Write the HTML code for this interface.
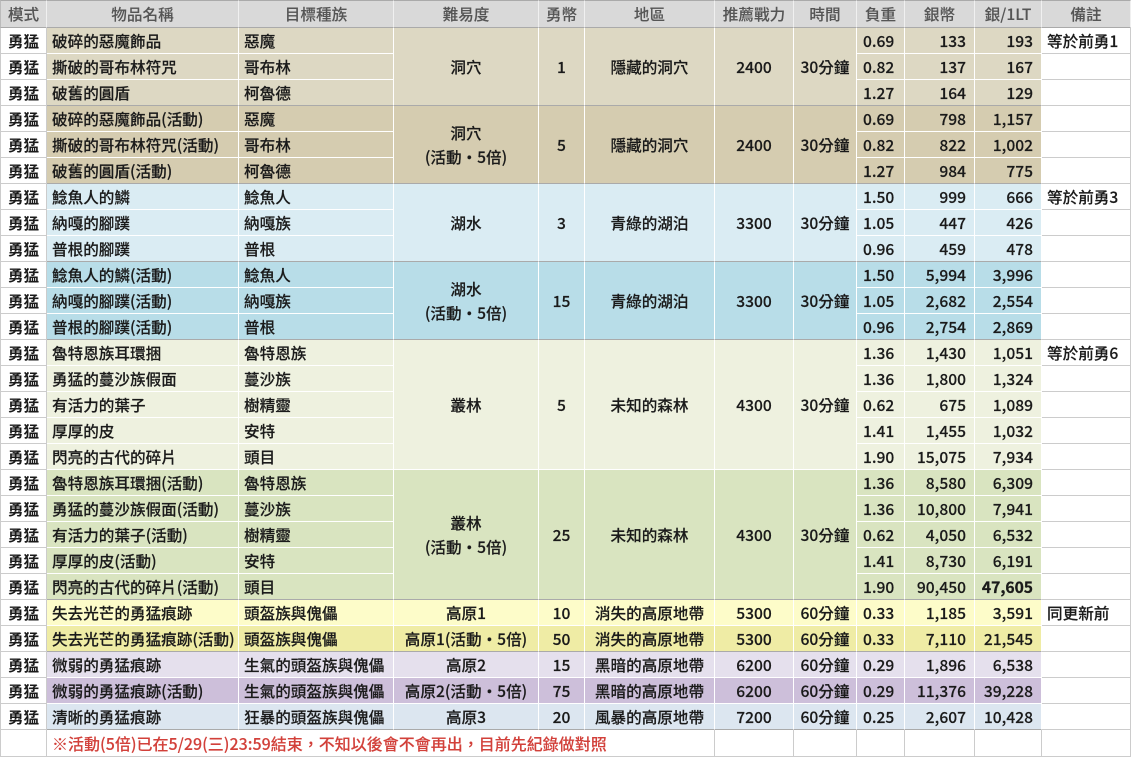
<!DOCTYPE html>
<html><head><meta charset="utf-8">
<style>
html,body{margin:0;padding:0;background:#fff;}
body{width:1131px;height:757px;overflow:hidden;}
table{border-collapse:separate;border-spacing:0;table-layout:fixed;width:1131px;font-family:"Noto Sans CJK TC","Liberation Sans",sans-serif;font-size:15.6px;font-weight:500;color:#1a1a1a;-webkit-text-stroke:0.15px #1a1a1a;}
td,th{border-right:1px solid #fff;border-bottom:1px solid #fff;height:25px;padding:0 5px;white-space:nowrap;overflow:hidden;line-height:20px;box-sizing:border-box;}
th{height:28px;background:#d9d9d9;color:#555;-webkit-text-stroke:0.1px #555;font-weight:500;border-right:1px solid #f0f0f0;border-bottom:1px solid #aaa;border-top:1px solid #aaa;}
th:first-child{border-left:1px solid #bbb;}
tr{height:26px;}
tr.h{height:28px;}
td.m{background:#fff;font-weight:bold;-webkit-text-stroke:0;border-left:1px solid #ccc;border-right:1px solid #ccc;border-bottom:1px solid #ccc;text-align:center;padding:0;}
td.r{background:#fff;border-right:1px solid #ccc;border-bottom:1px solid #ccc;}
td.c{text-align:center;}
td.n{text-align:right;padding-right:8px;}
td.ld{text-align:left;padding-left:6px;}
.gb{border-bottom:1px solid #aaa !important;}
.a td:not(.m):not(.r){background:#ddd8c3;} .a2 td:not(.m):not(.r){background:#d5ccb0;}
.b td:not(.m):not(.r){background:#daecf3;} .b2 td:not(.m):not(.r){background:#b8dde8;}
.e td:not(.m):not(.r){background:#eef1df;} .e2 td:not(.m):not(.r){background:#d9e4c0;}
.y td:not(.m):not(.r){background:#fdfcc9;} .y2 td:not(.m):not(.r){background:#efeca5;}
.p td:not(.m):not(.r){background:#e5e0ed;} .p2 td:not(.m):not(.r){background:#cdbfda;}
.s td:not(.m):not(.r){background:#dce6f0;}
td.sp{line-height:24px;}
.note td{height:27px;}
.red{color:#d2403a;-webkit-text-stroke:0.1px #d2403a;font-size:16px;}
</style></head><body>
<table>
<colgroup><col style="width:47px"><col style="width:192px"><col style="width:155px"><col style="width:145px"><col style="width:46px"><col style="width:130px"><col style="width:79px"><col style="width:63px"><col style="width:48px"><col style="width:70px"><col style="width:67px"><col style="width:89px"></colgroup>
<tr class="h"><th>模式</th><th>物品名稱</th><th>目標種族</th><th>難易度</th><th>勇幣</th><th>地區</th><th>推薦戰力</th><th>時間</th><th>負重</th><th>銀幣</th><th>銀/1LT</th><th>備註</th></tr>

<tr class="a"><td class="m">勇猛</td><td>破碎的惡魔飾品</td><td>惡魔</td><td class="c gb" rowspan="3">洞穴</td><td class="c gb" rowspan="3">1</td><td class="c gb" rowspan="3">隱藏的洞穴</td><td class="c gb" rowspan="3">2400</td><td class="c gb" rowspan="3">30分鐘</td><td class="ld">0.69</td><td class="n">133</td><td class="n">193</td><td class="r">等於前勇1</td></tr>
<tr class="a"><td class="m">勇猛</td><td>撕破的哥布林符咒</td><td>哥布林</td><td class="ld">0.82</td><td class="n">137</td><td class="n">167</td><td class="r"></td></tr>
<tr class="a"><td class="m">勇猛</td><td class="gb">破舊的圓盾</td><td class="gb">柯魯德</td><td class="ld gb">1.27</td><td class="n gb">164</td><td class="n gb">129</td><td class="r"></td></tr>

<tr class="a2"><td class="m">勇猛</td><td>破碎的惡魔飾品(活動)</td><td>惡魔</td><td class="c gb sp" rowspan="3">洞穴<br>(活動・5倍)</td><td class="c gb" rowspan="3">5</td><td class="c gb" rowspan="3">隱藏的洞穴</td><td class="c gb" rowspan="3">2400</td><td class="c gb" rowspan="3">30分鐘</td><td class="ld">0.69</td><td class="n">798</td><td class="n">1,157</td><td class="r"></td></tr>
<tr class="a2"><td class="m">勇猛</td><td>撕破的哥布林符咒(活動)</td><td>哥布林</td><td class="ld">0.82</td><td class="n">822</td><td class="n">1,002</td><td class="r"></td></tr>
<tr class="a2"><td class="m">勇猛</td><td class="gb">破舊的圓盾(活動)</td><td class="gb">柯魯德</td><td class="ld gb">1.27</td><td class="n gb">984</td><td class="n gb">775</td><td class="r"></td></tr>

<tr class="b"><td class="m">勇猛</td><td>鯰魚人的鱗</td><td>鯰魚人</td><td class="c gb" rowspan="3">湖水</td><td class="c gb" rowspan="3">3</td><td class="c gb" rowspan="3">青綠的湖泊</td><td class="c gb" rowspan="3">3300</td><td class="c gb" rowspan="3">30分鐘</td><td class="ld">1.50</td><td class="n">999</td><td class="n">666</td><td class="r">等於前勇3</td></tr>
<tr class="b"><td class="m">勇猛</td><td>納嘎的腳蹼</td><td>納嘎族</td><td class="ld">1.05</td><td class="n">447</td><td class="n">426</td><td class="r"></td></tr>
<tr class="b"><td class="m">勇猛</td><td class="gb">普根的腳蹼</td><td class="gb">普根</td><td class="ld gb">0.96</td><td class="n gb">459</td><td class="n gb">478</td><td class="r"></td></tr>

<tr class="b2"><td class="m">勇猛</td><td>鯰魚人的鱗(活動)</td><td>鯰魚人</td><td class="c gb sp" rowspan="3">湖水<br>(活動・5倍)</td><td class="c gb" rowspan="3">15</td><td class="c gb" rowspan="3">青綠的湖泊</td><td class="c gb" rowspan="3">3300</td><td class="c gb" rowspan="3">30分鐘</td><td class="ld">1.50</td><td class="n">5,994</td><td class="n">3,996</td><td class="r"></td></tr>
<tr class="b2"><td class="m">勇猛</td><td>納嘎的腳蹼(活動)</td><td>納嘎族</td><td class="ld">1.05</td><td class="n">2,682</td><td class="n">2,554</td><td class="r"></td></tr>
<tr class="b2"><td class="m">勇猛</td><td class="gb">普根的腳蹼(活動)</td><td class="gb">普根</td><td class="ld gb">0.96</td><td class="n gb">2,754</td><td class="n gb">2,869</td><td class="r"></td></tr>

<tr class="e"><td class="m">勇猛</td><td>魯特恩族耳環捆</td><td>魯特恩族</td><td class="c" rowspan="5">叢林</td><td class="c" rowspan="5">5</td><td class="c" rowspan="5">未知的森林</td><td class="c" rowspan="5">4300</td><td class="c" rowspan="5">30分鐘</td><td class="ld">1.36</td><td class="n">1,430</td><td class="n">1,051</td><td class="r">等於前勇6</td></tr>
<tr class="e"><td class="m">勇猛</td><td>勇猛的蔓沙族假面</td><td>蔓沙族</td><td class="ld">1.36</td><td class="n">1,800</td><td class="n">1,324</td><td class="r"></td></tr>
<tr class="e"><td class="m">勇猛</td><td>有活力的葉子</td><td>樹精靈</td><td class="ld">0.62</td><td class="n">675</td><td class="n">1,089</td><td class="r"></td></tr>
<tr class="e"><td class="m">勇猛</td><td>厚厚的皮</td><td>安特</td><td class="ld">1.41</td><td class="n">1,455</td><td class="n">1,032</td><td class="r"></td></tr>
<tr class="e"><td class="m">勇猛</td><td>閃亮的古代的碎片</td><td>頭目</td><td class="ld">1.90</td><td class="n">15,075</td><td class="n">7,934</td><td class="r"></td></tr>

<tr class="e2"><td class="m">勇猛</td><td>魯特恩族耳環捆(活動)</td><td>魯特恩族</td><td class="c gb sp" rowspan="5">叢林<br>(活動・5倍)</td><td class="c gb" rowspan="5">25</td><td class="c gb" rowspan="5">未知的森林</td><td class="c gb" rowspan="5">4300</td><td class="c gb" rowspan="5">30分鐘</td><td class="ld">1.36</td><td class="n">8,580</td><td class="n">6,309</td><td class="r"></td></tr>
<tr class="e2"><td class="m">勇猛</td><td>勇猛的蔓沙族假面(活動)</td><td>蔓沙族</td><td class="ld">1.36</td><td class="n">10,800</td><td class="n">7,941</td><td class="r"></td></tr>
<tr class="e2"><td class="m">勇猛</td><td>有活力的葉子(活動)</td><td>樹精靈</td><td class="ld">0.62</td><td class="n">4,050</td><td class="n">6,532</td><td class="r"></td></tr>
<tr class="e2"><td class="m">勇猛</td><td>厚厚的皮(活動)</td><td>安特</td><td class="ld">1.41</td><td class="n">8,730</td><td class="n">6,191</td><td class="r"></td></tr>
<tr class="e2"><td class="m">勇猛</td><td class="gb">閃亮的古代的碎片(活動)</td><td class="gb">頭目</td><td class="ld gb">1.90</td><td class="n gb">90,450</td><td class="n gb" style="font-weight:bold;-webkit-text-stroke:0.3px #1a1a1a">47,605</td><td class="r"></td></tr>

<tr class="y"><td class="m">勇猛</td><td>失去光芒的勇猛痕跡</td><td>頭盔族與傀儡</td><td class="c">高原1</td><td class="c">10</td><td class="c">消失的高原地帶</td><td class="c">5300</td><td class="c">60分鐘</td><td class="ld">0.33</td><td class="n">1,185</td><td class="n">3,591</td><td class="r">同更新前</td></tr>
<tr class="y2"><td class="m">勇猛</td><td class="gb">失去光芒的勇猛痕跡(活動)</td><td class="gb">頭盔族與傀儡</td><td class="c gb">高原1(活動・5倍)</td><td class="c gb">50</td><td class="c gb">消失的高原地帶</td><td class="c gb">5300</td><td class="c gb">60分鐘</td><td class="ld gb">0.33</td><td class="n gb">7,110</td><td class="n gb">21,545</td><td class="r"></td></tr>
<tr class="p"><td class="m">勇猛</td><td>微弱的勇猛痕跡</td><td>生氣的頭盔族與傀儡</td><td class="c">高原2</td><td class="c">15</td><td class="c">黑暗的高原地帶</td><td class="c">6200</td><td class="c">60分鐘</td><td class="ld">0.29</td><td class="n">1,896</td><td class="n">6,538</td><td class="r"></td></tr>
<tr class="p2"><td class="m">勇猛</td><td>微弱的勇猛痕跡(活動)</td><td>生氣的頭盔族與傀儡</td><td class="c">高原2(活動・5倍)</td><td class="c">75</td><td class="c">黑暗的高原地帶</td><td class="c">6200</td><td class="c">60分鐘</td><td class="ld">0.29</td><td class="n">11,376</td><td class="n">39,228</td><td class="r"></td></tr>
<tr class="s"><td class="m">勇猛</td><td class="gb">清晰的勇猛痕跡</td><td class="gb">狂暴的頭盔族與傀儡</td><td class="c gb">高原3</td><td class="c gb">20</td><td class="c gb">風暴的高原地帶</td><td class="c gb">7200</td><td class="c gb">60分鐘</td><td class="ld gb">0.25</td><td class="n gb">2,607</td><td class="n gb">10,428</td><td class="r"></td></tr>
<tr class="note" style="height:27px"><td class="m"></td><td class="r red" colspan="5">※活動(5倍)已在5/29(三)23:59結束，不知以後會不會再出，目前先紀錄做對照</td><td class="r"></td><td class="r"></td><td class="r"></td><td class="r"></td><td class="r"></td><td class="r"></td></tr>
</table>
</body></html>
